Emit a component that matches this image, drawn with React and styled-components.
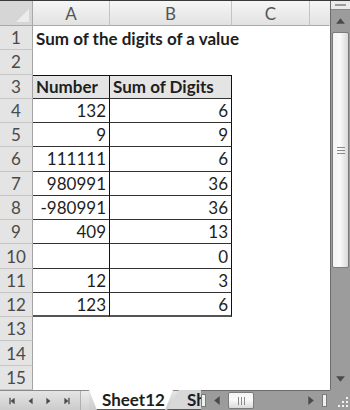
import React from "react";
import styled, { createGlobalStyle } from "styled-components";

const GlobalStyle = createGlobalStyle`
  html, body {
    margin: 0;
    padding: 0;
    background: #ffffff;
  }
  body {
    font-family: Lato, "Open Sans", "Liberation Sans", sans-serif;
  }
`;

const rows = [
  { n: 1, a: "Sum of the digits of a value", title: true },
  { n: 2 },
  { n: 3, a: "Number", b: "Sum of Digits", head: true },
  { n: 4, a: "132", b: "6" },
  { n: 5, a: "9", b: "9" },
  { n: 6, a: "111111", b: "6" },
  { n: 7, a: "980991", b: "36" },
  { n: 8, a: "-980991", b: "36" },
  { n: 9, a: "409", b: "13" },
  { n: 10, a: "", b: "0" },
  { n: 11, a: "12", b: "3" },
  { n: 12, a: "123", b: "6", last: true },
  { n: 13 },
  { n: 14 },
  { n: 15 },
];

const inTable = (r) => r.n >= 3 && r.n <= 12;

function Arrow({ dir, bar, size = 8, color = "#4a4a4a" }) {
  const pts = {
    left: "7,1 7,9 2,5",
    right: "3,1 3,9 8,5",
    up: "1,7 9,7 5,2",
    down: "1,3 9,3 5,8",
  }[dir];
  return (
    <svg width={size} height={size} viewBox="0 0 10 10">
      <polygon points={pts} fill={color} />
      {bar === "left" && <rect x="0.5" y="1" width="1.6" height="8" fill={color} />}
      {bar === "right" && <rect x="7.9" y="1" width="1.6" height="8" fill={color} />}
    </svg>
  );
}

function App() {
  return (
    <>
      <GlobalStyle />
      <Window>
        <Main>
          <Sheet>
            <Corner />
            <ColHead>A</ColHead>
            <ColHead>B</ColHead>
            <ColHead>C</ColHead>
            <ColHead $last />
            {rows.map((r) => (
              <React.Fragment key={r.n}>
                <RowHead>{r.n}</RowHead>
                <Cell
                  $bold={r.title || r.head}
                  $head={r.head}
                  $table={inTable(r)}
                  $top={r.head}
                  $last={r.last}
                  $align={r.title || r.head ? "left" : "right"}
                >
                  {r.a}
                </Cell>
                <Cell
                  $bold={r.head}
                  $head={r.head}
                  $table={inTable(r)}
                  $top={r.head}
                  $last={r.last}
                  $align={r.head ? "left" : "right"}
                >
                  {r.b}
                </Cell>
                <Cell />
                <Cell />
              </React.Fragment>
            ))}
          </Sheet>
          <VScroll>
            <SplitBox />
            <ScrollBtn $h={22}>
              <Arrow dir="up" size={11} />
            </ScrollBtn>
            <VThumb>
              <GripLines />
            </VThumb>
            <Track />
            <ScrollBtn $h={24}>
              <Arrow dir="down" size={11} />
            </ScrollBtn>
          </VScroll>
        </Main>
        <BottomBar>
          <NavButtons>
            <NavBtn><Arrow dir="left" bar="left" /></NavBtn>
            <NavBtn><Arrow dir="left" /></NavBtn>
            <NavBtn><Arrow dir="right" /></NavBtn>
            <NavBtn><Arrow dir="right" bar="right" /></NavBtn>
          </NavButtons>
          <NavEnd />
          <Tabs>
            <Tab $active>Sheet12</Tab>
            <Tab>Sheet13</Tab>
          </Tabs>
          <HScroll>
            <SplitHandle />
            <ScrollBtnH>
              <Arrow dir="left" size={11} />
            </ScrollBtnH>
            <HThumb>
              <GripLinesV />
            </HThumb>
            <Track />
            <ScrollBtnH>
              <Arrow dir="right" size={11} />
            </ScrollBtnH>
            <SplitHandle $right />
          </HScroll>
          <ResizeGrip>
            <svg width="14" height="14" viewBox="0 0 14 14">
              {[[11, 3], [7, 7], [11, 7], [3, 11], [7, 11], [11, 11]].map(([x, y]) => (
                <rect key={`${x}-${y}`} x={x} y={y} width="2" height="2" fill="#f2f2f2" />
              ))}
            </svg>
          </ResizeGrip>
        </BottomBar>
      </Window>
    </>
  );
}

const Window = styled.div`
  width: 350px;
  height: 410px;
  display: flex;
  flex-direction: column;
  box-sizing: border-box;
  border-top: 1px solid #3a3a3a;
  overflow: hidden;
  background: #ffffff;
`;

const Main = styled.div`
  flex: 1;
  display: flex;
  min-height: 0;
`;

const Sheet = styled.div`
  width: 330px;
  display: grid;
  grid-template-columns: 33px 77px 122px 78px 20px;
  grid-template-rows: 25px repeat(15, 1fr);
  font-size: 17px;
  font-variant-numeric: tabular-nums;
  color: #1e1e1e;
`;

const Corner = styled.div`
  position: relative;
  background: #d6d6d6;
  border-right: 1px solid #a9a9a9;
  border-bottom: 1px solid #a9a9a9;
  &::after {
    content: "";
    position: absolute;
    right: 3px;
    bottom: 3px;
    border-style: solid;
    border-width: 0 0 13px 13px;
    border-color: transparent transparent #ececec transparent;
  }
`;

const ColHead = styled.div`
  display: flex;
  align-items: center;
  justify-content: center;
  background: linear-gradient(#f6f6f6, #e2e2e2);
  border-right: 1px solid ${(p) => (p.$last ? "transparent" : "#c4c4c4")};
  border-bottom: 1px solid #a9a9a9;
  color: #555555;
  font-size: 17px;
`;

const RowHead = styled.div`
  display: flex;
  align-items: center;
  justify-content: center;
  background: #e4e4e4;
  border-right: 1px solid #a4a4a4;
  border-bottom: 1px solid #c6c6c6;
  color: #4a4a4a;
  font-size: 17px;
  box-sizing: border-box;
`;

const Cell = styled.div`
  display: flex;
  align-items: center;
  justify-content: ${(p) => (p.$align === "left" ? "flex-start" : "flex-end")};
  padding: 0 3px;
  box-sizing: border-box;
  white-space: nowrap;
  overflow: visible;
  min-width: 0;
  font-weight: ${(p) => (p.$bold ? 700 : 400)};
  background: ${(p) => (p.$head ? "#e4e4e4" : "transparent")};
  border-top: ${(p) => (p.$top ? "1px solid #111" : "none")};
  border-right: ${(p) => (p.$table ? "1px solid #111" : "none")};
  border-bottom: ${(p) =>
    p.$last ? "2px solid #555" : p.$table ? "1.5px solid #333" : "none"};
`;

const VScroll = styled.div`
  width: 20px;
  display: flex;
  flex-direction: column;
  background: #9c9c9c;
  border-left: 1px solid #6c6c6c;
  box-sizing: border-box;
`;

const SplitBox = styled.div`
  height: 8px;
  background: #eaeaea;
  border-bottom: 1px solid #888;
  display: flex;
  align-items: center;
  justify-content: center;
  &::after {
    content: "";
    width: 11px;
    height: 2px;
    background: #9a9a9a;
  }
`;

const ScrollBtn = styled.div`
  height: ${(p) => p.$h}px;
  display: flex;
  align-items: center;
  justify-content: center;
`;

const VThumb = styled.div`
  height: 234px;
  margin: 0 1px;
  background: linear-gradient(90deg, #f4f4f4, #fafafa 45%, #d9d9d9);
  border: 1px solid #7c7c7c;
  border-radius: 2px;
  display: flex;
  align-items: center;
  justify-content: center;
`;

const GripLines = styled.div`
  width: 8px;
  height: 7px;
  background: repeating-linear-gradient(#8a8a8a 0 1px, transparent 1px 3px);
`;

const Track = styled.div`
  flex: 1;
`;

const BottomBar = styled.div`
  height: 20px;
  display: flex;
  background: linear-gradient(#e4e4e4, #cccccc);
  border-top: 1px solid #8a8a8a;
  box-sizing: border-box;
`;

const NavButtons = styled.div`
  width: 80px;
  display: flex;
  align-items: center;
  padding-left: 4px;
  box-sizing: border-box;
`;

const NavBtn = styled.div`
  width: 17.7px;
  display: flex;
  justify-content: center;
`;

const NavEnd = styled.div`
  width: 8px;
  border-left: 1px solid #b0b0b0;
  background: linear-gradient(#ececec, #d2d2d2);
`;

const Tabs = styled.div`
  width: 112px;
  flex: none;
  display: flex;
  overflow: hidden;
  margin-top: -1px;
`;

const Tab = styled.div`
  flex: none;
  width: ${(p) => (p.$active ? "84px" : "60px")};
  margin-left: ${(p) => (p.$active ? "0" : "-6px")};
  padding-left: ${(p) => (p.$active ? "13px" : "20px")};
  box-sizing: border-box;
  display: flex;
  align-items: center;
  font-size: 17px;
  font-weight: 700;
  color: #1e1e1e;
  background: ${(p) => (p.$active ? "#ffffff" : "#d8d8d8")};
  clip-path: ${(p) =>
    p.$active
      ? "polygon(0 0, 100% 0, calc(100% - 8px) 100%, 8px 100%)"
      : "polygon(0 100%, 12px 0, 100% 0, 100% 100%)"};
  z-index: ${(p) => (p.$active ? 1 : 0)};
  border-bottom: 1px solid #555;
`;

const HScroll = styled.div`
  flex: 1;
  display: flex;
  align-items: stretch;
  background: #9c9c9c;
  border-top: 1px solid #6c6c6c;
  margin-top: -1px;
`;

const SplitHandle = styled.div`
  flex: none;
  width: 3px;
  margin: ${(p) => (p.$right ? "3px 3px 3px 2px" : "3px 1px 3px 0")};
  background: #f0f0f0;
  border: 1px solid #7a7a7a;
`;

const ScrollBtnH = styled.div`
  flex: none;
  width: 20px;
  display: flex;
  align-items: center;
  justify-content: center;
`;

const HThumb = styled.div`
  flex: none;
  width: 24px;
  margin: 1px 0 1px 1px;
  background: linear-gradient(#f4f4f4, #fafafa 45%, #d9d9d9);
  border: 1px solid #7c7c7c;
  border-radius: 2px;
  display: flex;
  align-items: center;
  justify-content: center;
`;

const GripLinesV = styled.div`
  width: 7px;
  height: 8px;
  background: repeating-linear-gradient(90deg, #8a8a8a 0 1px, transparent 1px 3px);
`;

const ResizeGrip = styled.div`
  width: 20px;
  flex: none;
  background: #9c9c9c;
  display: flex;
  align-items: flex-end;
  justify-content: flex-end;
  padding: 0 1px 2px 0;
  box-sizing: border-box;
  margin-top: -1px;
`;

export default App;
